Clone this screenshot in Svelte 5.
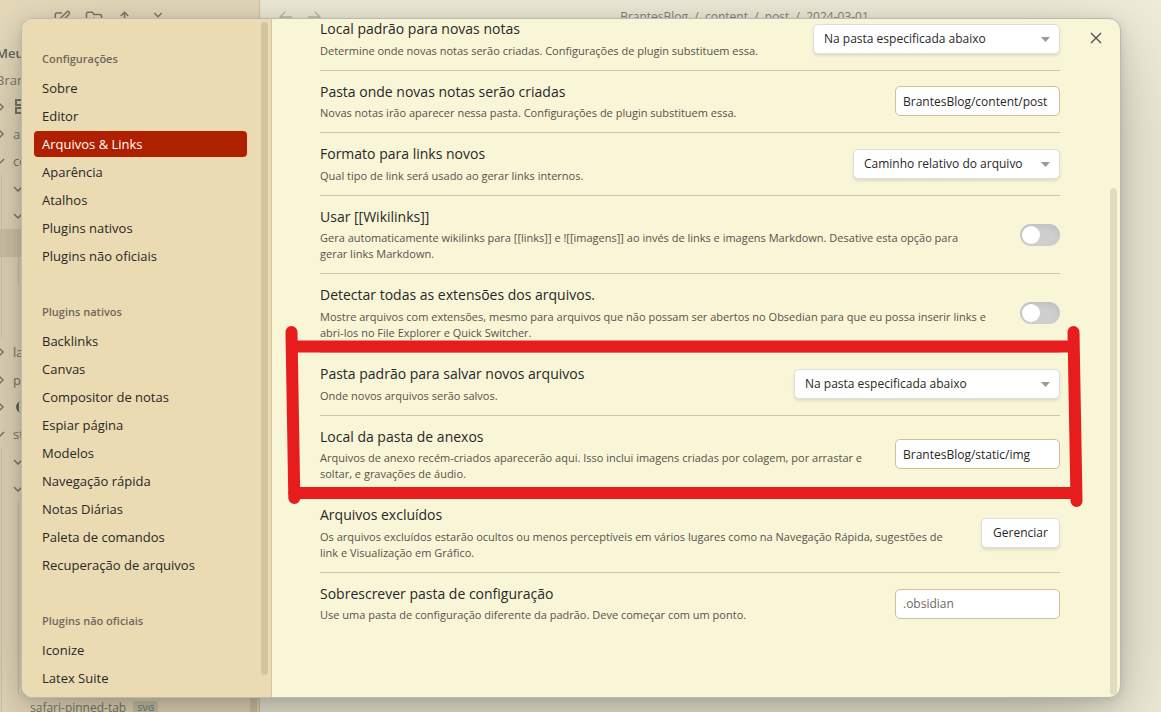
<script>
  const groups = [
    {
      title: 'Configurações',
      items: ['Sobre', 'Editor', 'Arquivos & Links', 'Aparência', 'Atalhos', 'Plugins nativos', 'Plugins não oficiais'],
    },
    {
      title: 'Plugins nativos',
      items: [
        'Backlinks', 'Canvas', 'Compositor de notas', 'Espiar página', 'Modelos', 'Navegação rápida',
        'Notas Diárias', 'Paleta de comandos', 'Recuperação de arquivos',
      ],
    },
    { title: 'Plugins não oficiais', items: ['Iconize', 'Latex Suite'] },
  ];
  let active = $state('Arquivos & Links');

  const settings = [
    { id: 'new-notes', name: 'Local padrão para novas notas', desc: 'Determine onde novas notas serão criadas. Configurações de plugin substituem essa.', type: 'select', value: 'Na pasta especificada abaixo', width: 247 },
    { id: 'new-folder', name: 'Pasta onde novas notas serão criadas', desc: 'Novas notas irão aparecer nessa pasta. Configurações de plugin substituem essa.', type: 'text', value: 'BrantesBlog/content/post' },
    { id: 'link-format', name: 'Formato para links novos', desc: 'Qual tipo de link será usado ao gerar links internos.', type: 'select', value: 'Caminho relativo do arquivo', width: 207 },
    { id: 'wikilinks', name: 'Usar [[Wikilinks]]', desc: 'Gera automaticamente wikilinks para [[links]] e ![[imagens]] ao invés de links e imagens Markdown. Desative esta opção para gerar\u00a0links Markdown.', type: 'toggle' },
    { id: 'extensions', name: 'Detectar todas as extensões dos arquivos.', desc: 'Mostre arquivos com extensões, mesmo para arquivos que não possam ser abertos no Obsedian para que eu possa inserir links e abri-los no File Explorer e Quick Switcher.', type: 'toggle' },
    { id: 'new-files', name: 'Pasta padrão para salvar novos arquivos', desc: 'Onde novos arquivos serão salvos.', type: 'select', value: 'Na pasta especificada abaixo', width: 266 },
    { id: 'attachments', name: 'Local da pasta de anexos', desc: 'Arquivos de anexo recém-criados aparecerão aqui. Isso inclui imagens criadas por colagem, por arrastar e soltar, e gravações de áudio.', type: 'text', value: 'BrantesBlog/static/img' },
    { id: 'excluded', name: 'Arquivos excluídos', desc: 'Os arquivos excluídos estarão ocultos ou menos perceptíveis em vários lugares como na Navegação Rápida, sugestões de link\u00a0e\u00a0Visualização em Gráfico.', type: 'button', value: 'Gerenciar' },
    { id: 'config-folder', name: 'Sobrescrever pasta de configuração', desc: 'Use uma pasta de configuração diferente da padrão. Deve começar com um ponto.', type: 'text', value: '', placeholder: '.obsidian' },
  ];

  const blank = (n, guides) => Array.from({ length: n }, () => ({ guides }));
  const tree = [
    { mark: 'right', icon: 'panel' },
    { mark: 'right', label: 'as' },
    { mark: 'down', label: 'co' },
    { mark: 'down', deep: true, guides: 1 },
    { mark: 'down', deep: true, guides: 1 },
    { guides: 2, selected: true },
    { guides: 2 },
    ...blank(2, 1),
    { mark: 'right', label: 'la' },
    { mark: 'right', label: 'p' },
    { mark: 'right', icon: 'moon' },
    { mark: 'down', label: 'st' },
    { mark: 'down', deep: true, guides: 1 },
    { mark: 'down', deep: true, guides: 1 },
    ...blank(7, 2),
    { guides: 1, file: 'safari-pinned-tab', tag: 'SVG' },
  ];
</script>

<div class="app">
  <aside class="explorer">
    <div class="tools">
      <svg viewBox="0 0 24 24"><path d="M12 4H5a2 2 0 0 0-2 2v13a2 2 0 0 0 2 2h13a2 2 0 0 0 2-2v-7M18.400 2.600a2.100 2.100 0 0 1 3 3L12 15l-4 1 1-4z" /></svg>
      <svg viewBox="0 0 24 24"><path d="M4 20h16a2 2 0 0 0 2-2V8a2 2 0 0 0-2-2h-8l-2-3H4a2 2 0 0 0-2 2v13a2 2 0 0 0 2 2zM12 10v6M9 13h6" /></svg>
      <svg viewBox="0 0 24 24"><path d="M5 8l5-5 5 5M10 3v18M18 14h3M18 19h4" /></svg>
      <svg viewBox="0 0 24 24"><path d="M7 4l5 5 5-5M7 20l5-5 5 5" /></svg>
    </div>
    <div class="vault"><b>Meu</b><span>Bran</span></div>
    <div class="tree">
      {#each tree as row}
        <div class="node" class:selected={row.selected}>
          {#if row.guides}<i class="guide"></i>{/if}
          {#if row.guides === 2}<i class="guide second"></i>{/if}
          {#if row.mark}
            <svg class="mark" class:deep={row.deep} viewBox="0 0 10 10">
              <path d={row.mark === 'right' ? 'M4 1l4 4-4 4' : 'M1 3l4 4 4-4'} />
            </svg>
          {/if}
          {#if row.label}<span>{row.label}</span>{/if}
          {#if row.icon === 'panel'}
            <svg class="glyph" viewBox="0 0 16 16"><path d="M3 1h12v5H3zM3 9h12v5H3z" /></svg>
          {/if}
          {#if row.icon === 'moon'}
            <svg class="glyph" viewBox="0 0 16 16"><path class="solid" d="M9 2a6 6 0 0 0 0 12 3 3 0 0 1-3-3V6a3 3 0 0 1 3-4z" /></svg>
          {/if}
          {#if row.file}<span class="file">{row.file}</span><small>{row.tag}</small>{/if}
        </div>
      {/each}
    </div>
    <div class="explorer-bar"></div>
  </aside>

  <main class="note">
    <div class="nav">
      <svg viewBox="0 0 24 24"><path d="M11 4l-8 8 8 8M3 12h18" /></svg>
      <svg viewBox="0 0 24 24"><path d="M13 4l8 8-8 8M21 12H3" /></svg>
    </div>
    <div class="crumbs">BrantesBlog&nbsp; /&nbsp; content&nbsp; /&nbsp; post&nbsp; /&nbsp; 2024-03-01</div>
  </main>

  <div class="modal" role="dialog" aria-label="Configurações">
    <nav class="sidebar">
      <div class="menu">
        {#each groups as group}
          <section>
            <h2>{group.title}</h2>
            {#each group.items as item}
              <button class="item" class:active={active === item} onclick={() => (active = item)}>{item}</button>
            {/each}
          </section>
        {/each}
      </div>
      <div class="side-bar"></div>
    </nav>

    <div class="content">
      {#each settings as s}
        <div class="setting">
          <div class="info">
            <label class="name" for={s.id}>{s.name}</label>
            <div class="desc">{s.desc}</div>
          </div>
          {#if s.type === 'select'}
            <div class="dropdown" style="width: {s.width}px">
              <select id={s.id}><option>{s.value}</option></select>
              <svg viewBox="0 0 10 5"><path d="M0 0h9L4.500 5z" /></svg>
            </div>
          {:else if s.type === 'text'}
            <input class="field" id={s.id} type="text" value={s.value} placeholder={s.placeholder} />
          {:else if s.type === 'toggle'}
            <input class="toggle" id={s.id} type="checkbox" />
          {:else}
            <button class="action" id={s.id}>{s.value}</button>
          {/if}
        </div>
      {/each}
    </div>

    <button class="close" aria-label="Fechar">
      <svg viewBox="0 0 12 12"><path d="M1 1l10 10M11 1L1 11" /></svg>
    </button>
    <div class="content-bar"></div>
    <svg class="marker" viewBox="0 0 802 190">
      <path d="M9.500 13L12.300 179M10 27.500H791M791.500 13L794.500 182M12 174H794" />
    </svg>
  </div>
</div>

<style>
  :global(body) {
    margin: 0;
  }
  .app {
    position: relative;
    display: flex;
    height: 100vh;
    overflow: hidden;
    background: #efecd8;
    color: #282828;
    font-family: 'Open Sans', 'Noto Sans', sans-serif;
    font-size: 13px;
  }
  .app * {
    box-sizing: border-box;
  }
  button,
  input,
  select {
    font: inherit;
    color: inherit;
  }

  .explorer {
    position: relative;
    display: flex;
    flex-direction: column;
    flex: 0 0 260px;
    height: 100%;
    overflow: hidden;
    border-right: 1px solid #d2c6a4;
    background: #e6dabb;
    color: #807868;
  }
  .explorer svg,
  .nav svg {
    flex: none;
    fill: none;
    stroke: currentColor;
    stroke-width: 2;
  }
  .tools {
    display: flex;
    gap: 14px;
    height: 40px;
    padding: 10px 0 0 53px;
  }
  .tools svg {
    width: 18px;
    height: 18px;
  }
  .vault {
    display: flex;
    flex-direction: column;
    height: 53px;
    line-height: 27px;
    margin-left: -4px;
  }
  .vault b {
    font-weight: 600;
    color: #6a655b;
  }
  .tree {
    display: flex;
    flex: 1;
    flex-direction: column;
    margin-bottom: -9px;
  }
  .node {
    position: relative;
    display: flex;
    flex: 1;
    align-items: center;
  }
  .node.selected {
    background: #d3c8aa;
  }
  .node span {
    margin-left: 8px;
  }
  .node .file {
    margin-left: 30px;
    font-size: 12px;
  }
  .node small {
    margin-left: 7px;
    padding: 0 4px;
    border-radius: 3px;
    background: #cfc5a8;
    color: #72908a;
    font-size: 9px;
    font-weight: 600;
    line-height: 13px;
  }
  .explorer .mark {
    width: 10px;
    height: 10px;
    margin-left: -5px;
    stroke-width: 1.500;
  }
  .explorer .deep {
    margin-left: 13px;
  }
  .glyph {
    width: 16px;
    height: 16px;
    margin-left: 8px;
  }
  .solid {
    fill: #6a655b;
    stroke: none;
  }
  .guide {
    position: absolute;
    top: 0;
    bottom: 0;
    left: 1px;
    width: 1px;
    background: #cfc4a6;
  }
  .guide.second {
    left: 18px;
  }
  .explorer-bar {
    position: absolute;
    right: 2px;
    bottom: 0;
    width: 7px;
    height: 400px;
    background: #d3c7a6;
  }

  .note {
    display: flex;
    flex: 1;
    align-items: flex-start;
    padding-top: 8px;
    color: #85827a;
  }
  .nav {
    display: flex;
    flex: 0 0 80px;
    gap: 12px;
    padding: 1px 0 0 18px;
    color: #bdb9a8;
  }
  .nav svg {
    width: 16px;
    height: 16px;
    stroke-width: 2;
  }
  .crumbs {
    flex: 1;
    padding-right: 12px;
    font-size: 12px;
    line-height: 17px;
    text-align: center;
  }

  .modal {
    position: absolute;
    inset: 18px 40px 14px 21px;
    display: flex;
    border: 1px solid #b9b9b6;
    border-radius: 12px;
    background: #f9f5d7;
    box-shadow:
      0 2px 7px rgba(0, 0, 0, 0.07),
      0 6px 25px rgba(0, 0, 0, 0.12),
      0 30px 90px rgba(0, 0, 0, 0.22);
  }
  .sidebar {
    position: relative;
    flex: 0 0 250px;
    border-right: 1px solid #d5c4a1;
    border-radius: 11px 0 0 11px;
    background: #ebdbb2;
  }
  .menu {
    padding: 28px 24px 0 12px;
  }
  section {
    display: flex;
    flex-direction: column;
    gap: 2px;
    margin-bottom: 31px;
  }
  h2 {
    margin: 0;
    padding: 0 8px 2px;
    color: #6f675c;
    font-size: 11px;
    font-weight: 600;
    line-height: 24px;
  }
  .item {
    padding: 0 8px;
    border: 0;
    border-radius: 4px;
    background: none;
    line-height: 26px;
    text-align: left;
  }
  .item.active {
    background: #af2000;
    color: #fff;
  }
  .side-bar,
  .content-bar {
    position: absolute;
    width: 7px;
    border-radius: 4px;
  }
  .side-bar {
    top: 3px;
    right: 3px;
    bottom: 22px;
    background: #d4c5a0;
  }
  .content-bar {
    top: 169px;
    right: 3px;
    bottom: 2px;
    background: #e1dbc1;
  }

  .content {
    flex: 1;
    min-width: 0;
    padding: 0 60px 0 48px;
  }
  .setting {
    display: flex;
    align-items: center;
    gap: 16px;
    padding: 11px 0;
    border-top: 1px solid #d5c4a1;
  }
  .setting:first-child {
    padding-top: 0;
    border-top: 0;
  }
  .info {
    display: flex;
    flex: 1;
    flex-direction: column;
    gap: 4px;
    min-width: 0;
  }
  .name {
    font-size: 14px;
    line-height: 1.4;
  }
  .desc {
    color: #5a524b;
    font-size: 11px;
    line-height: 16px;
  }
  .dropdown {
    position: relative;
    flex: none;
  }
  .dropdown select,
  .field,
  .action {
    height: 30px;
    border: 1px solid #dedede;
    border-radius: 5px;
    background: #fff;
    font-size: 12px;
  }
  .dropdown select {
    display: block;
    width: 100%;
    padding: 0 26px 0 10px;
    appearance: none;
    box-shadow: 0 2px 3px rgba(0, 0, 0, 0.1);
  }
  .dropdown svg {
    position: absolute;
    top: 13px;
    right: 9px;
    width: 10px;
    height: 5px;
    fill: #999;
    pointer-events: none;
  }
  .field {
    flex: none;
    width: 165px;
    padding: 0 7px;
    border-color: #d0be9c;
  }
  .field::placeholder {
    color: #6f6a66;
    opacity: 1;
  }
  .toggle {
    flex: none;
    width: 40px;
    height: 22px;
    margin: 0;
    padding: 2px;
    border-radius: 11px;
    appearance: none;
    background: #cfcfcf;
    box-shadow: inset 0 3px 6px rgba(0, 0, 0, 0.08);
  }
  .toggle::before {
    content: '';
    display: block;
    width: 18px;
    height: 18px;
    border-radius: 50%;
    background: #fff;
  }
  .toggle:checked::before {
    margin-left: auto;
  }
  .action {
    flex: none;
    width: 79px;
    padding: 0;
    box-shadow: 0 2px 3px rgba(0, 0, 0, 0.1);
  }
  .close {
    position: absolute;
    top: 8px;
    right: 13px;
    display: grid;
    place-items: center;
    width: 22px;
    height: 22px;
    padding: 0;
    border: 0;
    background: none;
  }
  .close svg {
    width: 12px;
    height: 12px;
    fill: none;
    stroke: #57524c;
    stroke-width: 1.400;
  }
  .marker {
    position: absolute;
    top: 300px;
    left: 260px;
    width: 802px;
    height: 190px;
    fill: none;
    stroke: #e71c1c;
    stroke-width: 12;
    stroke-linecap: round;
    pointer-events: none;
  }
</style>
